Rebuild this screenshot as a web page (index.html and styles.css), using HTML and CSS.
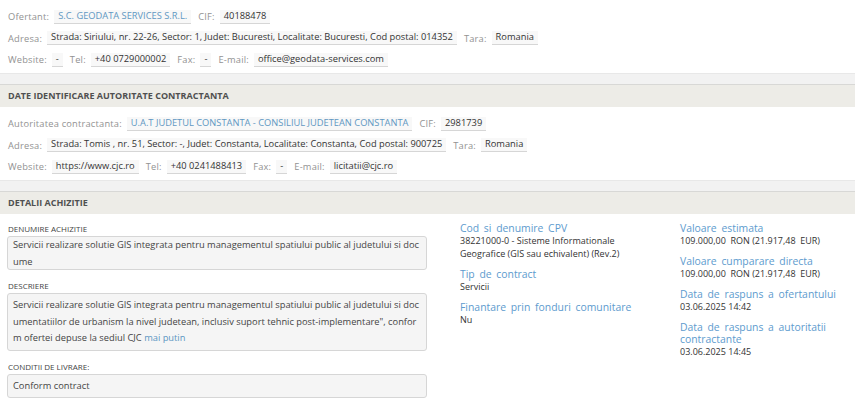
FILE: index.html
```html
<!DOCTYPE html>
<html lang="ro">
<head>
  <meta charset="UTF-8">
  <title>Detalii achizitie</title>
  <link rel="stylesheet" href="styles.css">
</head>
<body>
  <!-- ofertant -->
  <div class="info">
    <div class="row">
      <span class="lbl">Ofertant:</span><span class="val link">S.C. GEODATA SERVICES S.R.L.</span>
      <span class="lbl">CIF:</span><span class="val">40188478</span>
    </div>
    <div class="row">
      <span class="lbl">Adresa:</span><span class="val">Strada: Siriului, nr. 22-26, Sector: 1, Judet: Bucuresti, Localitate: Bucuresti, Cod postal: 014352</span>
      <span class="lbl">Tara:</span><span class="val">Romania</span>
    </div>
    <div class="row">
      <span class="lbl">Website:</span><span class="val">-</span>
      <span class="lbl">Tel:</span><span class="val">+40 0729000002</span>
      <span class="lbl">Fax:</span><span class="val">-</span>
      <span class="lbl">E-mail:</span><span class="val">office@geodata-services.com</span>
    </div>
  </div>

  <div class="gap"></div>
  <div class="sect-head">DATE IDENTIFICARE AUTORITATE CONTRACTANTA</div>

  <!-- autoritate -->
  <div class="info">
    <div class="row">
      <span class="lbl">Autoritatea contractanta:</span><span class="val link">U.A.T JUDETUL CONSTANTA - CONSILIUL JUDETEAN CONSTANTA</span>
      <span class="lbl">CIF:</span><span class="val">2981739</span>
    </div>
    <div class="row">
      <span class="lbl">Adresa:</span><span class="val">Strada: Tomis , nr. 51, Sector: -, Judet: Constanta, Localitate: Constanta, Cod postal: 900725</span>
      <span class="lbl">Tara:</span><span class="val">Romania</span>
    </div>
    <div class="row">
      <span class="lbl">Website:</span><span class="val">https://www.cjc.ro</span>
      <span class="lbl">Tel:</span><span class="val">+40 0241488413</span>
      <span class="lbl">Fax:</span><span class="val">-</span>
      <span class="lbl">E-mail:</span><span class="val">licitatii@cjc.ro</span>
    </div>
  </div>

  <div class="gap"></div>
  <div class="sect-head">DETALII ACHIZITIE</div>

  <div class="details">
    <div class="col-main">
      <div class="field-lbl">DENUMIRE ACHIZITIE</div>
      <div class="field-box short">Servicii realizare solutie GIS integrata pentru managementul spatiului public al judetului si docume</div>

      <div class="field-lbl">DESCRIERE</div>
      <div class="field-box">Servicii realizare solutie GIS integrata pentru managementul spatiului public al judetului si documentatiilor de urbanism la nivel judetean, inclusiv suport tehnic post-implementare", conform ofertei depuse la sediul CJC <a class="more" href="#">mai putin</a></div>

      <div class="field-lbl">CONDITII DE LIVRARE:</div>
      <div class="field-box">Conform contract</div>
    </div>

    <div class="col-mid">
      <div class="item">
        <div class="item-title">Cod si denumire CPV</div>
        <div class="item-val">38221000-0 - Sisteme Informationale Geografice (GIS sau echivalent) (Rev.2)</div>
      </div>
      <div class="item">
        <div class="item-title">Tip de contract</div>
        <div class="item-val">Servicii</div>
      </div>
      <div class="item">
        <div class="item-title">Finantare prin fonduri comunitare</div>
        <div class="item-val">Nu</div>
      </div>
    </div>

    <div class="col-side">
      <div class="item">
        <div class="item-title">Valoare estimata</div>
        <div class="item-val">109.000,00 &nbsp;RON (21.917,48 &nbsp;EUR)</div>
      </div>
      <div class="item">
        <div class="item-title">Valoare cumparare directa</div>
        <div class="item-val">109.000,00 &nbsp;RON (21.917,48 &nbsp;EUR)</div>
      </div>
      <div class="item">
        <div class="item-title">Data de raspuns a ofertantului</div>
        <div class="item-val">03.06.2025 14:42</div>
      </div>
      <div class="item">
        <div class="item-title">Data de raspuns a autoritatii contractante</div>
        <div class="item-val">03.06.2025 14:45</div>
      </div>
    </div>
  </div>
</body>
</html>
```

FILE: styles.css
```css
/* pagina */
body {
  margin: 0;
  background: #fff;
  font-family: "Open Sans", "Liberation Sans", sans-serif;
  color: #333;
  font-size: 9.3px;
}

/* randuri ofertant / autoritate */
.info {
  padding: 6px 8px 2px;
  border-bottom: 1px solid #e8e8e8;
}
.row {
  display: flex;
  align-items: center;
  height: 21.5px;
  white-space: nowrap;
}
.lbl {
  color: #929292;
  letter-spacing: 0.2px;
  margin-right: 5px;
}
.val {
  color: #333;
  background: #f8f8f8;
  border-bottom: 1px solid #d6d6d6;
  padding: 0 4px 1px;
  margin-right: 7px;
  line-height: 12px;
}
.val.link {
  color: #6097c2;
}

/* separator + titlu sectiune */
.gap {
  height: 10.5px;
  background: #f2f2f2;
}
.sect-head {
  background: #edece7;
  border-top: 1px solid #d8d8d6;
  height: 22px;
  line-height: 22px;
  padding-left: 8px;
  font-weight: 700;
  color: #505050;
  font-size: 9px;
}

/* detalii achizitie */
.details {
  display: grid;
  grid-template-columns: 420px 187px 165px;
  column-gap: 33px;
  padding: 10px 0 0 7px;
}
.field-lbl {
  font-size: 8px;
  color: #444;
  text-transform: uppercase;
  margin: 0 0 2px 1px;
  line-height: 10px;
}
.field-box {
  background: #f5f5f5;
  border: 1px solid #d6d6d6;
  border-radius: 3px;
  padding: 3px 5px;
  line-height: 16.5px;
  font-size: 9.3px;
  color: #444;
  word-break: break-all;
  margin-bottom: 11px;
}
.field-box.short {
  box-sizing: border-box;
  height: 34px;
  padding: 0 5px;
  overflow: hidden;
}
.more {
  color: #5b95c3;
  text-decoration: none;
}

.col-mid,
.col-side {
  margin-top: -2px;
}
.item {
  margin-bottom: 8px;
}
.item-title {
  color: #5d9bce;
  font-size: 10.4px;
  word-spacing: 2px;
  line-height: 12px;
}
.item-val {
  font-size: 9px;
  color: #333;
  line-height: 13px;
}
```
